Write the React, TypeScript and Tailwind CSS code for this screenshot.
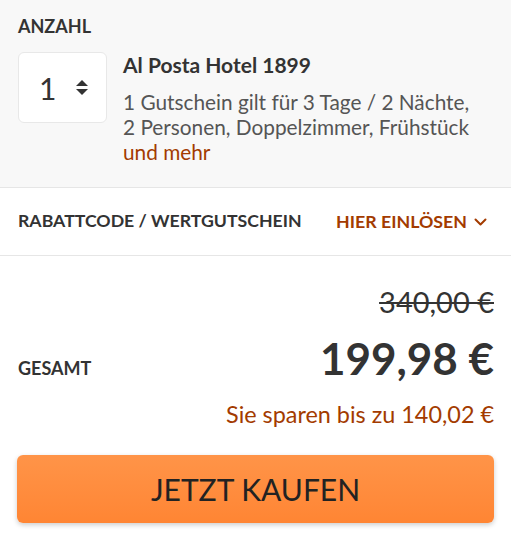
import React from "react";

const App = () => {
  return (
    <div className="w-[511px] h-[546px] bg-white font-['Lato',sans-serif] text-[#333]">
      {/* Quantity + product */}
      <div className="bg-[#f8f8f8] border-b border-[#e6e6e6] px-[18px] pt-[16px] pb-[23px]">
        <div className="text-[18px] font-bold leading-[20px] uppercase">Anzahl</div>
        <div className="mt-[16px] flex gap-[16px]">
          <div className="w-[89px] h-[71px] shrink-0 rounded-[6px] border border-[#e8e8e8] bg-white flex items-center pl-[20px] gap-[20px]">
            <span className="text-[30px] leading-none">1</span>
            <svg width="12" height="15" viewBox="0 0 12 15" fill="#333">
              <path d="M6 0 L12 6 L0 6 Z" />
              <path d="M0 9 L12 9 L6 15 Z" />
            </svg>
          </div>
          <div>
            <div className="text-[21px] font-bold leading-[24px] mt-[1px]">Al Posta Hotel 1899</div>
            <p className="mt-[12px] text-[20.8px] leading-[25px] text-[#555]">
              1 Gutschein gilt für 3 Tage / 2 Nächte,
              <br />
              2 Personen, Doppelzimmer, Frühstück
              <br />
              <a href="#" className="text-[#a33b00]">und mehr</a>
            </p>
          </div>
        </div>
      </div>

      {/* Discount code */}
      <div className="h-[68px] border-b border-[#e6e6e6] px-[18px] flex items-center justify-between">
        <span className="text-[17.7px] font-bold uppercase">Rabattcode / Wertgutschein</span>
        <button className="flex items-center gap-[7px] text-[17.8px] font-bold uppercase text-[#a33b00] mr-[6px]">
          Hier einlösen
          <svg width="13" height="8" viewBox="0 0 13 8" fill="none" stroke="#a33b00" strokeWidth="2" strokeLinecap="round" strokeLinejoin="round">
            <path d="M1.5 1.5 L6.5 6.5 L11.5 1.5" />
          </svg>
        </button>
      </div>

      {/* Totals */}
      <div className="px-[17px] pt-[30px]">
        <div className="text-right text-[29px] leading-[32px] line-through">340,00 €</div>
        <div className="mt-[15px] flex items-baseline justify-between">
          <span className="text-[18px] font-bold uppercase pl-[1px]">Gesamt</span>
          <span className="text-[44px] font-bold leading-[50px]">199,98 €</span>
        </div>
        <div className="mt-[18px] text-right text-[23.4px] leading-[26px] text-[#a33b00]">
          Sie sparen bis zu 140,02 €
        </div>
        <button className="mt-[28px] w-full h-[68px] rounded-[6px] bg-gradient-to-b from-[#ff9448] to-[#ff8533] shadow-[0_2px_5px_rgba(0,0,0,0.2)] text-[30px] text-[#222] uppercase">
          Jetzt kaufen
        </button>
      </div>
    </div>
  );
};

export default App;
